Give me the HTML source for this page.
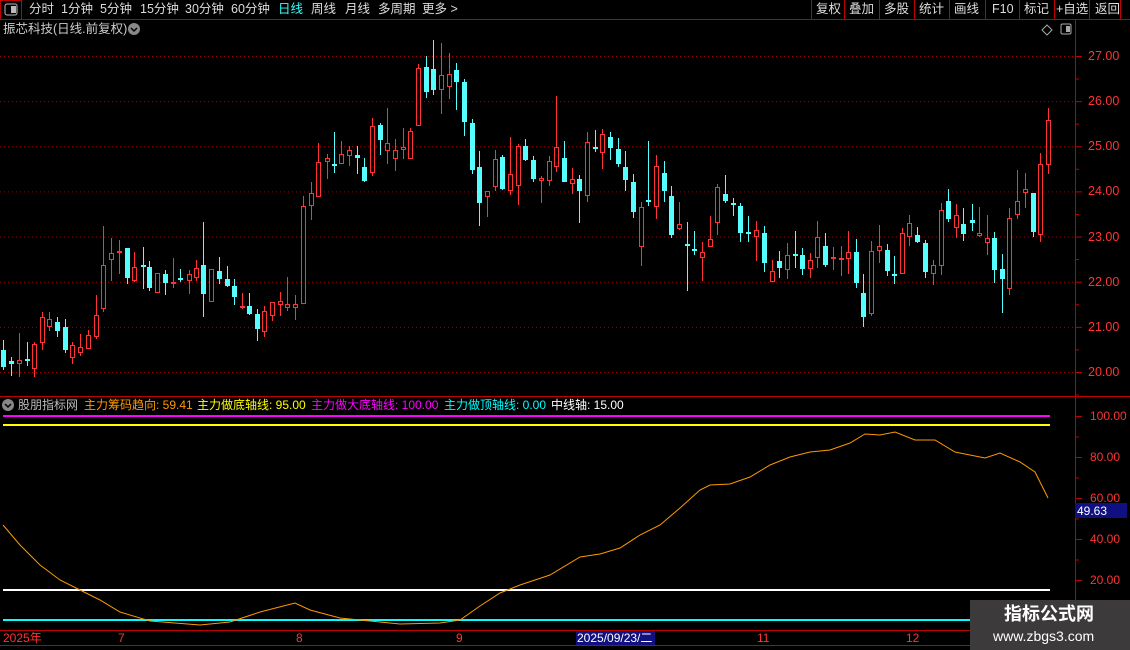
<!DOCTYPE html>
<html><head><meta charset="utf-8"><style>
*{margin:0;padding:0;box-sizing:border-box}
body{width:1130px;height:650px;background:#000;overflow:hidden;position:relative;font-family:"Liberation Sans","Noto Sans CJK SC",sans-serif}
.t{position:absolute;white-space:nowrap;font-size:12px;line-height:14px}
.m{position:absolute;top:2px;color:#ddd;font-size:12.5px;line-height:14px;white-space:nowrap}
</style></head><body>
<svg id="s" width="1130" height="650" style="position:absolute;left:0;top:0" xmlns="http://www.w3.org/2000/svg">
<g stroke="#c00000" stroke-width="1" fill="none">
<line x1="0" y1="19.5" x2="1130" y2="19.5"/>
<rect x="0.5" y="0.5" width="21" height="19"/>
<line x1="811.5" y1="0" x2="811.5" y2="19"/><line x1="844.5" y1="0" x2="844.5" y2="19"/><line x1="879.5" y1="0" x2="879.5" y2="19"/><line x1="914.5" y1="0" x2="914.5" y2="19"/><line x1="949.5" y1="0" x2="949.5" y2="19"/><line x1="985.5" y1="0" x2="985.5" y2="19"/><line x1="1019.5" y1="0" x2="1019.5" y2="19"/><line x1="1054.5" y1="0" x2="1054.5" y2="19"/><line x1="1089.5" y1="0" x2="1089.5" y2="19"/><line x1="1120.5" y1="0" x2="1120.5" y2="19"/>
<line x1="1075.5" y1="20" x2="1075.5" y2="646"/>
<line x1="0" y1="396.5" x2="1130" y2="396.5"/>
<line x1="0" y1="630.5" x2="1130" y2="630.5"/>
<line x1="0" y1="645.5" x2="1130" y2="645.5"/>
</g>
<g id="grid" stroke="#a00000" stroke-dasharray="1,3"></g>
<g id="ticks" stroke="#c00000"></g>
<g id="c"></g>
<line x1="3" y1="416" x2="1050" y2="416" stroke="#ff00ff" stroke-width="2"/>
<line x1="3" y1="425" x2="1050" y2="425" stroke="#ffff00" stroke-width="2"/>
<line x1="3" y1="590" x2="1050" y2="590" stroke="#ffffff" stroke-width="2"/>
<line x1="3" y1="620" x2="1075" y2="620" stroke="#00ffff" stroke-width="2"/>
<polyline fill="none" stroke="#ff9900" stroke-width="1" points="3,525 20,545 40,565 60,580 80,590 100,600 120,612 150,621 175,623 200,625 230,622 260,612 295,603 310,610 340,618 360,620 380,622 400,624 440,623 460,620 480,606 500,593 520,585 550,575 580,557 600,554 620,548 640,535 660,525 680,508 700,490 710,485 730,484 750,477 770,465 790,457 810,452 830,450 850,443 865,434 880,435 895,432 915,440 935,440 955,452 985,458 1000,453 1020,462 1035,472 1048,498"/>
<rect x="1075" y="503" width="52" height="15" fill="#101080"/>
<rect x="576" y="631" width="79" height="14" fill="#101080"/>
<g fill="none" stroke="#bbb"><rect x="5" y="4" width="12" height="11" rx="2"/></g>
<rect x="11" y="6" width="5" height="7" fill="#bbb"/>
<circle cx="134" cy="29" r="6" fill="#888"/><path d="M131 28l3 3 3-3" stroke="#000" fill="none" stroke-width="1.5"/>
<circle cx="8" cy="405" r="6" fill="#888"/><path d="M5 404l3 3 3-3" stroke="#000" fill="none" stroke-width="1.5"/>
<path d="M1047 25l5 5-5 5-5-5z" stroke="#aaa" fill="none"/>
<rect x="1061" y="24" width="10" height="10" rx="1.5" stroke="#aaa" fill="none"/><rect x="1066" y="26" width="4" height="6" fill="#aaa"/>
<rect x="970" y="600" width="160" height="50" fill="#3c3a3a"/>
</svg>
<div class="m" style="left:29px">分时</div>
<div class="m" style="left:61px">1分钟</div>
<div class="m" style="left:100px">5分钟</div>
<div class="m" style="left:140px">15分钟</div>
<div class="m" style="left:185px">30分钟</div>
<div class="m" style="left:231px">60分钟</div>
<div class="m" style="left:278px;color:#3ff">日线</div>
<div class="m" style="left:311px">周线</div>
<div class="m" style="left:345px">月线</div>
<div class="m" style="left:378px">多周期</div>
<div class="m" style="left:422px">更多 &gt;</div>
<div class="t" style="left:816px;top:2px;color:#ddd;font-size:12.5px">复权</div>
<div class="t" style="left:849px;top:2px;color:#ddd;font-size:12.5px">叠加</div>
<div class="t" style="left:884px;top:2px;color:#ddd;font-size:12.5px">多股</div>
<div class="t" style="left:919px;top:2px;color:#ddd;font-size:12.5px">统计</div>
<div class="t" style="left:954px;top:2px;color:#ddd;font-size:12.5px">画线</div>
<div class="t" style="left:992px;top:2px;color:#ddd;font-size:12.5px">F10</div>
<div class="t" style="left:1024px;top:2px;color:#ddd;font-size:12.5px">标记</div>
<div class="t" style="left:1056px;top:2px;color:#ddd;font-size:12.5px">+自选</div>
<div class="t" style="left:1095px;top:2px;color:#ddd;font-size:12.5px">返回</div>
<div class="t" style="left:3px;top:22px;color:#ccc;font-size:12.5px">振芯科技(日线.前复权)</div>
<div class="t" style="left:18px;top:398px;color:#bbb">股朋指标网</div>
<div class="t" style="left:84px;top:398px;color:#ff9900">主力筹码趋向: 59.41</div>
<div class="t" style="left:197px;top:398px;color:#ff0">主力做底轴线: 95.00</div>
<div class="t" style="left:311px;top:398px;color:#f0f">主力做大底轴线: 100.00</div>
<div class="t" style="left:444px;top:398px;color:#0ff">主力做顶轴线: 0.00</div>
<div class="t" style="left:551px;top:398px;color:#fff">中线轴: 15.00</div>
<div id="lab"></div>
<div class="t" style="left:1077px;top:504px;color:#fff;font-size:12px">49.63</div>
<div class="t" style="left:3px;top:631px;color:#f33">2025年</div>
<div class="t" style="left:118px;top:631px;color:#f33">7</div>
<div class="t" style="left:296px;top:631px;color:#f33">8</div>
<div class="t" style="left:456px;top:631px;color:#f33">9</div>
<div class="t" style="left:577px;top:631px;color:#fff">2025/09/23/二</div>
<div class="t" style="left:757px;top:631px;color:#f33">11</div>
<div class="t" style="left:906px;top:631px;color:#f33">12</div>
<div class="t" style="left:1004px;top:604px;color:#fff;font-size:18px;line-height:20px;font-weight:bold">指标公式网</div>
<div class="t" style="left:993px;top:628px;color:#fff;font-size:14px;line-height:16px">www.zbgs3.com</div>
<script>
var d=[[3,350,367,340,370,0],[11,361,364,357,376,0],[19,360,364,333,377,1],[27,359,359,342,366,0],[34,344,369,342,377,1],[42,317,343,312,350,1],[49,319,327,312,331,1],[57,322,331,317,337,0],[65,327,350,319,353,0],[72,345,358,342,364,1],[80,347,353,334,356,1],[88,335,349,330,349,1],[96,315,337,295,339,1],[103,265,309,226,312,1],[111,253,260,238,281,1],[119,251,253,240,274,1],[127,248,278,248,284,0],[134,267,281,252,282,1],[143,265,265,247,289,0],[149,267,288,261,291,0],[157,273,293,273,293,1],[165,274,283,270,295,0],[173,282,283,258,288,1],[180,278,280,269,282,0],[189,274,281,270,294,1],[196,268,278,260,281,1],[203,265,294,222,317,0],[211,269,302,269,302,1],[219,271,279,257,284,0],[227,279,286,266,287,0],[234,286,297,279,305,0],[242,306,308,293,309,1],[249,306,314,293,315,0],[257,314,329,309,341,0],[264,311,332,306,337,1],[272,302,316,302,321,1],[280,301,305,292,316,1],[287,304,308,277,311,1],[295,304,308,295,320,1],[303,206,304,196,304,1],[311,193,206,182,220,1],[318,162,197,143,197,1],[327,158,162,154,179,1],[334,164,164,132,173,0],[341,154,164,141,164,1],[349,150,156,146,166,1],[357,155,158,146,174,0],[364,167,181,158,182,0],[372,126,173,118,176,1],[380,125,140,123,155,0],[387,143,151,108,164,1],[395,150,159,139,171,1],[403,147,150,128,159,1],[410,131,159,128,159,1],[418,68,126,64,126,1],[426,67,92,56,98,0],[433,69,90,40,95,0],[441,75,90,43,114,1],[449,74,87,53,99,1],[456,70,82,63,110,0],[464,82,122,79,136,0],[472,123,170,119,174,0],[479,167,203,151,226,0],[487,191,197,191,217,1],[495,159,187,150,191,1],[502,157,189,155,190,0],[510,174,191,137,195,1],[518,146,186,144,205,1],[525,146,160,139,161,0],[533,160,179,156,182,0],[541,178,181,176,203,1],[549,161,181,156,186,1],[556,147,167,96,172,1],[564,158,182,141,182,0],[572,179,184,168,194,1],[579,179,191,175,223,0],[587,142,196,132,202,1],[595,147,149,130,152,0],[602,134,153,129,169,1],[610,137,148,132,160,0],[618,149,164,138,167,0],[625,167,180,151,191,0],[633,182,212,174,218,0],[641,207,247,202,266,1],[648,200,201,141,206,0],[656,166,207,155,219,1],[664,173,191,161,202,0],[671,196,235,186,238,0],[679,224,229,202,230,1],[687,244,244,222,291,0],[694,249,251,231,255,0],[702,252,258,242,281,1],[710,239,247,216,247,1],[717,187,223,184,235,1],[725,194,201,175,203,0],[733,203,205,198,216,0],[740,206,233,203,242,0],[748,232,234,216,242,0],[756,230,237,221,261,1],[764,233,263,226,272,0],[772,271,282,260,282,1],[779,261,268,251,278,0],[787,255,270,243,279,1],[795,254,256,231,268,0],[802,255,269,248,275,0],[810,260,269,253,278,1],[817,237,258,221,268,1],[825,246,265,233,267,0],[833,257,259,247,270,1],[841,258,259,246,276,1],[848,252,259,231,274,1],[856,252,283,239,288,0],[863,293,317,274,327,0],[871,251,314,241,316,1],[879,246,251,225,263,1],[887,250,271,244,276,0],[894,274,274,256,284,0],[902,233,274,228,274,1],[909,223,237,215,246,1],[917,235,242,227,243,0],[925,243,272,240,278,0],[933,265,274,260,285,1],[941,210,266,203,275,1],[948,201,219,189,222,0],[956,215,228,204,238,1],[963,224,234,208,241,0],[972,220,223,204,231,0],[979,233,236,207,237,1],[987,238,243,215,255,1],[994,238,270,232,283,0],[1002,269,279,254,313,0],[1009,218,289,208,295,1],[1017,201,215,170,219,1],[1025,189,193,173,208,1],[1033,193,232,193,237,0],[1040,164,235,153,242,1],[1048,120,165,108,174,1]];
var h='';d.forEach(function(c){var x=c[0],t=c[1],b=c[2],col=c[5]?'#ff3333':'#55ffff';
var top=Math.min(t,b),bot=Math.max(t,b);
h+='<line x1="'+(x+.5)+'" y1="'+c[3]+'" x2="'+(x+.5)+'" y2="'+c[4]+'" stroke="'+col+'"/>';
if(bot-top<2){h+='<rect x="'+(x-2)+'" y="'+top+'" width="5" height="2" fill="'+col+'"/>';}
else if(c[5]){h+='<rect x="'+(x-1.5)+'" y="'+(top+.5)+'" width="4" height="'+(bot-top-1)+'" fill="#000" stroke="'+col+'"/>';}
else{h+='<rect x="'+(x-2)+'" y="'+top+'" width="5" height="'+(bot-top)+'" fill="'+col+'"/>';}});
document.getElementById('c').innerHTML=h;
var g='',tk='',l='',p=['27.00','26.00','25.00','24.00','23.00','22.00','21.00','20.00'];
for(var i=0;i<8;i++){var y=56+i*45.14;g+='<line x1="0" y1="'+(y+.5)+'" x2="1075" y2="'+(y+.5)+'"/>';tk+='<line x1="1075" y1="'+(y+.5)+'" x2="1082" y2="'+(y+.5)+'"/><line x1="1075" y1="'+(y+23)+'" x2="1079" y2="'+(y+23)+'"/>';
l+='<div class="t" style="left:1088px;top:'+(y-7)+'px;color:#ff3333;font-size:12.5px">'+p[i]+'</div>';}
var q=['100.00','80.00','60.00','40.00','20.00'];
for(var i=0;i<5;i++){var y=416+i*41;tk+='<line x1="1075" y1="'+(y+.5)+'" x2="1082" y2="'+(y+.5)+'"/><line x1="1075" y1="'+(y+21)+'" x2="1079" y2="'+(y+21)+'"/>';
l+='<div class="t" style="left:1090px;top:'+(y-7)+'px;color:#ff3333;font-size:12px">'+q[i]+'</div>';}
document.getElementById('grid').innerHTML=g;document.getElementById('ticks').innerHTML=tk;document.getElementById('lab').innerHTML=l;
</script>
</body></html>
